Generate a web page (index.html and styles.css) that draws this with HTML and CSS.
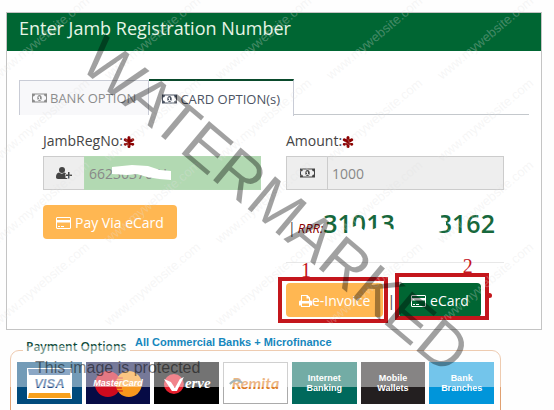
FILE: index.html
```html
<!DOCTYPE html>
<html lang="en">
<head>
    <meta charset="UTF-8">
    <meta name="viewport" content="width=device-width, initial-scale=1.0">
    <title>Jamb Payment</title>
    <link rel="stylesheet" href="styles.css">
</head>
<body>
    <!-- shared icons -->
    <svg class="sprite" width="0" height="0">
        <symbol id="money" viewBox="0 0 30 20">
            <path fill="currentColor" fill-rule="evenodd" d="M0 1h30v18H0zM6 3a4 4 0 0 1-4 4v6a4 4 0 0 1 4 4h18a4 4 0 0 1 4-4V7a4 4 0 0 1-4-4z"/>
            <path fill="currentColor" fill-rule="evenodd" d="M15 4c3 0 4.500 3 4.500 6s-1.500 6-4.500 6-4.500-3-4.500-6 1.500-6 4.500-6zM14 7l-2 1v1h2v3h-2v1.500h6V12h-2V7z"/>
        </symbol>
        <symbol id="card" viewBox="0 0 30 24">
            <path fill="currentColor" fill-rule="evenodd" d="M2 0h26l2 2v20l-2 2H2l-2-2V2zM2 2v4h26V2zM2 11v11h26V11z"/>
            <path fill="currentColor" d="M4 18h4v2H4zM10 18h6v2h-6z"/>
        </symbol>
        <symbol id="user-plus" viewBox="0 0 32 24">
            <circle cx="12" cy="6" r="6" fill="currentColor"/>
            <path fill="currentColor" d="M6 11c-4 1-6 4-6 9 0 2 1 4 4 4h16c2 0 3-1 3-2h-4v-4h-1v-4h2c-.5-1.500-1.500-2.500-3-3-3 3-8 3-11 0z"/>
            <path fill="currentColor" d="M24 10h3v5h5v3h-5v5h-3v-5h-5v-3h5z"/>
        </symbol>
        <symbol id="print" viewBox="0 0 26 24">
            <path fill="currentColor" fill-rule="evenodd" d="M4 0h13l5 5v6h1c2 0 3 1 3 3v7h-4v3H4v-3H0v-7c0-2 1-3 3-3h1zM6 2v10h14V7h-5V2zM6 17v5h14v-5z"/>
        </symbol>
        <symbol id="star" viewBox="0 0 24 24">
            <path stroke="currentColor" stroke-width="6" stroke-linecap="round" d="M12 3v18M4.500 7.500l15 9M19.500 7.500l-15 9"/>
        </symbol>
    </svg>

    <div class="panel">
        <h1>Enter Jamb Registration Number</h1>
        <div class="panel-body">
            <div class="tabs">
                <button class="tab"><svg class="icon-money"><use href="#money"/></svg>BANK OPTION</button>
                <button class="tab active"><svg class="icon-money"><use href="#money"/></svg>CARD OPTION(s)</button>
            </div>
            <div class="form">
                <div class="col">
                    <label for="regno">JambRegNo:<svg class="star"><use href="#star"/></svg></label>
                    <div class="group">
                        <span class="addon"><svg class="icon-user"><use href="#user-plus"/></svg></span>
                        <input type="text" id="regno" class="green" value="66236370 H">
                        <svg class="erase-reg" viewBox="0 0 62 16"><path fill="#fff" d="M0 3l20-2 16 1 12 4 11 1v9l-12-1-12-2-10-3-10 1-15-1z"/></svg>
                    </div>
                    <button class="btn orange wide pay"><svg class="icon-card"><use href="#card"/></svg>Pay Via eCard</button>
                </div>
                <div class="col">
                    <label for="amount">Amount:<svg class="star"><use href="#star"/></svg></label>
                    <div class="group">
                        <span class="addon"><svg class="icon-money"><use href="#money"/></svg></span>
                        <input type="text" id="amount" value="1000" readonly>
                    </div>
                    <div class="rrr">
                        <span class="bar">|</span><em>RRR:</em><strong>31013<span class="gap"></span>3162</strong>
                        <svg class="erase-rrr" viewBox="0 0 104 28"><path fill="#fff" d="M0 16l8-3 8 7 10-4 10-2 8 4V13l30-13h16l2 8 4 2v8l-8 2-4 6-40 2H26l-4-4-8 2-8 4-6-3z"/></svg>
                    </div>
                    <hr>
                    <div class="actions">
                        <div class="mark">
                            <button class="btn orange wide"><svg class="icon-print"><use href="#print"/></svg>e-Invoice</button>
                            <span class="frame one"><b>1</b></span>
                        </div>
                        <span class="sep">|</span>
                        <div class="mark">
                            <button class="btn dark"><svg class="icon-card"><use href="#card"/></svg>eCard</button>
                            <span class="frame two"><b>2</b></span>
                        </div>
                    </div>
                </div>
            </div>
        </div>
    </div>

    <fieldset class="options">
        <legend>Payment Options</legend>
        <span class="note">All Commercial Banks + Microfinance</span>
        <div class="tiles">
            <div class="tile visa"><span>VISA</span></div>
            <div class="tile master">
                <svg viewBox="0 0 65 42">
                    <circle cx="22" cy="22" r="13" fill="#cf0a1e"/>
                    <circle cx="43" cy="22" r="13" fill="#f7971c"/>
                    <path stroke="#cf0a1e" d="M30 16h7M29 19h8M28 26h8M30 29h7"/>
                </svg>
                <span>MasterCard</span>
            </div>
            <div class="tile verve">
                <svg viewBox="0 0 65 42">
                    <circle cx="20" cy="22" r="10" fill="#e5202e"/>
                    <path fill="#fff" d="M10 17l7 3 4 6 5-9 4-2-7 14h-5z"/>
                </svg>
                <span>erve</span>
            </div>
            <div class="tile remita">
                <span>Remita</span>
                <svg viewBox="0 0 65 42"><path fill="none" stroke="#5c7a80" stroke-width="2" d="M6 21c5-5 9-5 13-1"/></svg>
            </div>
            <div class="tile internet">Internet<br>Banking</div>
            <div class="tile mobile">Mobile<br>Wallets</div>
            <div class="tile bank">Bank<br>Branches</div>
        </div>
    </fieldset>

    <div class="protect">This image is protected</div>

    <svg class="watermark" width="554" height="410">
        <defs>
            <g id="site">
                <text transform="translate(-2 80) rotate(-40)">www.mywebsite.com</text>
                <text transform="translate(109 80) rotate(-40)">www.mywebsite.com</text>
                <text transform="translate(220 80) rotate(-40)">www.mywebsite.com</text>
                <text transform="translate(331 80) rotate(-40)">www.mywebsite.com</text>
                <text transform="translate(442 80) rotate(-40)">www.mywebsite.com</text>
            </g>
        </defs>
        <g class="site">
            <use href="#site"/>
            <use href="#site" y="82"/>
            <use href="#site" y="164"/>
            <use href="#site" y="246"/>
        </g>
        <text class="big" transform="translate(275 206) rotate(40)" y="20" text-anchor="middle">WATERMARKED</text>
    </svg>
</body>
</html>
```

FILE: styles.css
```css
* {
    box-sizing: border-box;
}
body {
    margin: 0;
    padding: 12px 12px 0 6px;
    background-color: #fefefe;
    font-family: "Open Sans", sans-serif;
    font-size: 14px;
    color: #444;
    position: relative;
    overflow: hidden;
}
button, input {
    font-family: inherit;
    font-size: 14px;
}
.sprite {
    position: absolute;
}

.panel {
    border: 1px solid #c4c4c4;
    background-color: #fff;
}
.panel h1 {
    margin: 0;
    height: 38px;
    padding: 0 12px;
    background-color: #006633;
    color: #e6f5e6;
    font-size: 18px;
    font-weight: normal;
    line-height: 30px;
}
.panel-body {
    padding: 28px 12px 12px;
}

.tabs {
    display: flex;
    height: 36px;
    border-bottom: 1px solid #c4c8cc;
}
.tab {
    height: 35px;
    margin-top: 1px;
    padding: 0 12px;
    border: 1px solid #c9ccd6;
    border-bottom: 0;
    background-color: #f8f8fa;
    color: #8c8c8c;
    font-size: 13px;
    font-weight: 500;
    white-space: nowrap;
}
.tab svg {
    margin-right: 3px;
}
.tab.active {
    height: 37px;
    margin-top: 0;
    padding: 0 13px;
    border-top: 2px solid #0a4a2c;
    border-left: 0;
    background-color: #fff;
    color: #4c5463;
}
.icon-money {
    width: 15px;
    height: 10px;
}
.icon-card {
    width: 15px;
    height: 12px;
    margin-right: 4px;
    vertical-align: -1px;
}
.icon-user {
    width: 16px;
    height: 12px;
}
.icon-print {
    width: 13px;
    height: 12px;
    vertical-align: -1px;
}
.star {
    width: 12px;
    height: 12px;
    vertical-align: -2px;
    color: #8b0000;
}

.form {
    display: grid;
    grid-template-columns: repeat(2, minmax(0, 1fr));
    gap: 25px;
    padding: 17px 25px 0 24px;
}
label {
    display: block;
    height: 24px;
    line-height: 18px;
}
.group {
    display: flex;
    height: 34px;
    position: relative;
}
.addon {
    display: flex;
    flex: none;
    width: 41px;
    align-items: center;
    justify-content: center;
    border: 1px solid #ccc;
    border-right: 0;
    background-color: #eee;
}
.group input {
    flex: 1;
    min-width: 0;
    padding: 0 4px;
    border: 1px solid #ccc;
    background-color: #eee;
    color: #888;
}
.group input.green {
    border-color: #b4dab4;
    background-color: #b2d9b2;
}
.erase-reg {
    position: absolute;
    left: 69px;
    top: 8px;
    width: 62px;
    height: 16px;
}
.btn {
    height: 34px;
    padding: 0 12px;
    border: 0;
    border-radius: 4px;
    color: #fff;
    white-space: nowrap;
}
.wide {
    padding: 0 13px;
}
.orange {
    background-color: #ffb752;
}
.dark {
    background-color: #006633;
}
.pay {
    margin-top: 15px;
}

.rrr {
    height: 50px;
    margin-top: 15px;
    padding-left: 2px;
    line-height: 36px;
    white-space: nowrap;
    position: relative;
}
.rrr em {
    padding-left: 2px;
    color: #8b0000;
    font-size: 13px;
    font-weight: 500;
}
.rrr strong {
    color: #17683c;
    font-size: 25px;
    font-weight: 600;
}
.gap {
    display: inline-block;
    width: 43px;
}
.erase-rrr {
    position: absolute;
    left: 64px;
    top: 7px;
    width: 104px;
    height: 28px;
}
hr {
    margin: 7px 0 20px;
    border: 0;
    border-top: 1px solid #e8e8e8;
}
.actions {
    display: flex;
    align-items: center;
    gap: 4px;
}
.mark {
    position: relative;
}

/* red boxes drawn round the buttons */
.frame {
    position: absolute;
    border: 4px solid #c4161c;
}
.frame b {
    position: absolute;
    color: #c4161c;
    font-family: "Liberation Serif", serif;
    font-size: 20px;
    font-weight: normal;
    line-height: 20px;
}
.one {
    inset: -6px -5px -6px -8px;
}
.one b {
    left: 19px;
    top: -21px;
}
.two {
    inset: -10px -8px -3px -4px;
}
.two b {
    right: 12px;
    top: -21px;
}
.two::after {
    content: "";
    position: absolute;
    right: -7px;
    top: 16px;
    width: 5px;
    height: 5px;
    border-radius: 50%;
    background-color: #c4161c;
}

.options {
    min-width: 0;
    height: 84px;
    margin: 8px 41px 0 4px;
    padding: 0 6px;
    border: 1px solid #e0a070;
    border-radius: 9px;
    position: relative;
}
legend {
    margin-left: 6px;
    padding: 0 4px 6px 3px;
    color: #0c4a38;
    font-size: 12px;
    font-weight: 600;
    line-height: 18px;
}
.note {
    position: absolute;
    left: 124px;
    top: -27px;
    z-index: 1;
    color: #1587bd;
    font-family: "Liberation Sans", sans-serif;
    font-size: 11px;
    font-weight: bold;
    line-height: 14px;
    white-space: nowrap;
}
.tiles {
    display: grid;
    grid-template-columns: repeat(7, 1fr);
    gap: 4px;
}
.tile {
    display: flex;
    height: 42px;
    align-items: center;
    justify-content: center;
    color: #fff;
    font-family: "Liberation Sans", sans-serif;
    font-size: 9px;
    font-weight: bold;
    line-height: 10px;
    text-align: center;
    position: relative;
}
.tile svg {
    position: absolute;
    left: 0;
    top: 0;
    width: 100%;
    height: 42px;
}
.tile span {
    position: relative;
}
.visa {
    background-color: #004a7c;
}
.visa span {
    width: 43px;
    height: 29px;
    border: 1px solid #fff;
    border-top: 6px solid #2c5f95;
    border-bottom: 5px solid #f7a01c;
    outline: 1px solid #fff;
    background-color: #fff;
    color: #1a4a85;
    font-size: 13px;
    font-style: italic;
    line-height: 17px;
}
.master {
    background-color: #060b45;
}
.master span {
    font-style: italic;
}
.verve {
    background-color: #000;
}
.verve span {
    padding-left: 22px;
    font-family: "Liberation Serif", serif;
    font-size: 15px;
    font-style: italic;
}
.remita {
    border: 1px solid #aaa;
    background-color: #fff;
}
.remita span {
    color: #dc7a20;
    font-family: Lato, sans-serif;
    font-size: 16px;
    font-style: italic;
}
.internet {
    background-color: #00695c;
}
.mobile {
    background-color: #231f20;
}
.bank {
    background-color: #0095da;
}

/* copy protection layers */
.protect {
    position: absolute;
    left: 0;
    right: 0;
    top: 346px;
    height: 41px;
    padding: 12px 0 0 35px;
    background-color: rgba(255, 255, 255, 0.45);
    color: rgba(0, 0, 0, 0.5);
    font-family: "Liberation Sans", sans-serif;
    font-size: 16px;
    line-height: 20px;
}
.watermark {
    position: absolute;
    left: 0;
    top: 0;
    pointer-events: none;
}
.site {
    fill: rgba(225, 225, 225, 0.3);
    font-family: "Liberation Sans", sans-serif;
    font-size: 13px;
}
.big {
    fill: rgba(0, 0, 0, 0.37);
    font-family: "Liberation Sans", sans-serif;
    font-size: 62px;
}
```
